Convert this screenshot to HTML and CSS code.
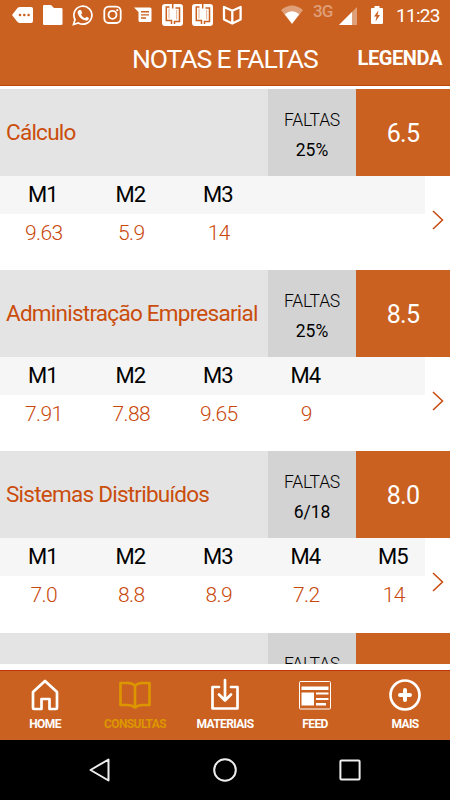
FILE: index.html
```html
<!DOCTYPE html>
<html lang="pt-BR">

<head>
    <meta charset="UTF-8">
    <meta name="viewport" content="width=device-width, initial-scale=1.0">
    <title>Notas e Faltas</title>
    <link rel="stylesheet" href="styles.css">
</head>

<body>
    <div class="app">
        <header>
            <div class="status">
                <svg width="250" height="30" viewBox="0 0 250 30" fill="#fff">
                    <path d="M12 15 L17.5 8 Q18.5 7 20 7 H31 Q33 7 33 9 V21 Q33 23 31 23 H20 Q18.5 23 17.5 22 Z" />
                    <g fill="#ca6120">
                        <circle cx="20" cy="15" r="1.3" />
                        <circle cx="24.3" cy="15" r="1.3" />
                        <circle cx="28.6" cy="15" r="1.3" />
                    </g>
                    <path d="M43 6 Q43 5 44 5 H51 L54 8 H61 Q62.5 8 62.5 9 V24 Q62.5 25 61 25 H44 Q43 25 43 24 Z" />
                    <path d="M73.5 24.5 L75 19.5 A9 9 0 1 1 78.3 22.9 Z" fill="none" stroke="#fff" stroke-width="1.7" />
                    <path d="M79 10 L81 10 L82.3 13 L81 14.5 Q82.5 17.5 85 18.3 L86.5 16.7 L89 18 Q88.5 21 86 20.6 Q79.5 19.5 77.6 13 Q77.5 11 79 10 Z" />
                    <g fill="none" stroke="#fff" stroke-width="1.8">
                        <rect x="104.3" y="6.6" width="16.4" height="16.4" rx="4.5" />
                        <circle cx="112.5" cy="14.8" r="4" />
                    </g>
                    <circle cx="117.3" cy="10.2" r="1.1" />
                    <path d="M134 7.5 H150 Q151.5 7.5 151.5 9 V20.5 Q151.5 22 150 22 H140 Q138.5 22 138.5 20.5 V12 Z" />
                    <path d="M141 11.8 H149 M141 14.9 H149 M141 18 H146" stroke="#ca6120" stroke-width="1.4" />
                    <g id="brackets">
                        <rect x="162" y="4" width="21" height="22" rx="3" />
                        <path d="M169.5 7 H166.3 V20.5 H171.5 V24 M175.5 8 H179.5 V21.5 H174.5 V24 M172.7 4 V8.5" fill="none" stroke="#ca6120" stroke-width="1.5" />
                        <path d="M169 8.5 V18.5 M176.7 10 V19.5" fill="none" stroke="#ca6120" stroke-width=".5" />
                    </g>
                    <use href="#brackets" x="30" />
                    <path d="M224 7 L232.3 10.8 L240.6 7 V19.5 L232.3 23.5 L224 19.5 Z M232.3 10.8 V23" fill="none" stroke="#fff" stroke-width="2.3" stroke-linejoin="round" />
                </svg>
                <div class="signal">
                    <svg class="wifi" width="24" height="20" viewBox="0 0 24 20">
                        <path d="M1 5 Q12 -4 23 5 L12 19 Z" fill="#fff" opacity=".4" />
                        <path d="M4.7 9.3 Q12 3.3 19.3 9.3 L12 18.7 Z" fill="#fff" />
                    </svg>
                    <span class="network">3G</span>
                    <svg class="bars" width="18" height="18" viewBox="0 0 18 18">
                        <path d="M18 0 V18 H0 Z" fill="#fff" opacity=".4" />
                        <path d="M13 5 V18 H0 Z" fill="#fff" />
                    </svg>
                    <svg class="battery" width="12" height="18" viewBox="0 0 12 18">
                        <path d="M3.5 0 H8.5 V2 H11 Q12 2 12 3 V17 Q12 18 11 18 H1 Q0 18 0 17 V3 Q0 2 1 2 H3.5 Z" fill="#fff" />
                        <path d="M7.5 4.3 L3 10.5 H5.5 L4.5 15.5 L9 9 H6.5 Z" fill="#ca6120" />
                    </svg>
                    <span class="clock">11:23</span>
                </div>
            </div>
            <div class="titlebar">
                <h1>NOTAS E FALTAS</h1>
                <a class="legend">LEGENDA</a>
            </div>
        </header>

        <main>
            <section class="course">
                <div class="summary">
                    <h2>Cálculo</h2>
                    <div class="absences"><span>FALTAS</span><b>25%</b></div>
                    <div class="average">6.5</div>
                </div>
                <div class="details">
                    <div class="grades">
                        <div class="labels"><span>M1</span><span>M2</span><span>M3</span></div>
                        <div class="values"><span>9.63</span><span>5.9</span><span>14</span></div>
                    </div>
                    <svg class="arrow" viewBox="0 0 12 20"><path d="M1 1 L10.5 10 L1 19" /></svg>
                </div>
            </section>

            <section class="course">
                <div class="summary">
                    <h2>Administração Empresarial</h2>
                    <div class="absences"><span>FALTAS</span><b>25%</b></div>
                    <div class="average">8.5</div>
                </div>
                <div class="details">
                    <div class="grades">
                        <div class="labels"><span>M1</span><span>M2</span><span>M3</span><span>M4</span></div>
                        <div class="values"><span>7.91</span><span>7.88</span><span>9.65</span><span>9</span></div>
                    </div>
                    <svg class="arrow" viewBox="0 0 12 20"><path d="M1 1 L10.5 10 L1 19" /></svg>
                </div>
            </section>

            <section class="course">
                <div class="summary">
                    <h2>Sistemas Distribuídos</h2>
                    <div class="absences"><span>FALTAS</span><b>6/18</b></div>
                    <div class="average">8.0</div>
                </div>
                <div class="details">
                    <div class="grades">
                        <div class="labels"><span>M1</span><span>M2</span><span>M3</span><span>M4</span><span>M5</span></div>
                        <div class="values"><span>7.0</span><span>8.8</span><span>8.9</span><span>7.2</span><span>14</span></div>
                    </div>
                    <svg class="arrow" viewBox="0 0 12 20"><path d="M1 1 L10.5 10 L1 19" /></svg>
                </div>
            </section>

            <section class="course">
                <div class="summary">
                    <h2></h2>
                    <div class="absences"><span>FALTAS</span><b></b></div>
                    <div class="average"></div>
                </div>
            </section>
        </main>

        <nav class="tabs">
            <a>
                <svg viewBox="0 0 34 34"><path d="M5 14 L17 3 L29 14 V30 Q29 31 28 31 H21.5 V21 H13.5 V31 H6 Q5 31 5 30 Z" /></svg>
                <span>HOME</span>
            </a>
            <a class="active">
                <svg viewBox="0 0 34 34"><path d="M17 7.5 Q13 4.5 8 5 H2.5 V27 H9 Q14 27 17 29.5 Q20 27 25 27 H31.5 V5 H26 Q21 4.5 17 7.5 V28" /></svg>
                <span>CONSULTAS</span>
            </a>
            <a>
                <svg viewBox="0 0 34 34"><path d="M11 9 H4.5 V30.5 H29.5 V9 H23 M17 2 V21 M11 16.5 L17 22.5 L23 16.5" /></svg>
                <span>MATERIAIS</span>
            </a>
            <a>
                <svg class="feed" viewBox="0 0 34 34">
                    <rect x="1.5" y="3.5" width="31" height="27.5" rx="1" />
                    <path class="fill" d="M3.5 8.5 H30.5 V12 H3.5 Z M3.5 14.5 H16 V27.5 H3.5 Z M18 14.5 H30.5 V16.5 H18 Z M18 20 H30.5 V22 H18 Z M18 25 H28 V27.5 H18 Z" />
                </svg>
                <span>FEED</span>
            </a>
            <a>
                <svg viewBox="0 0 34 34"><circle cx="17" cy="17" r="14.5" /><path class="plus" d="M17 12 V22 M12 17 H22" /></svg>
                <span>MAIS</span>
            </a>
        </nav>

        <div class="android">
            <svg viewBox="0 0 24 24"><path d="M20.5 1.5 V22.5 L2.5 12 Z" /></svg>
            <svg viewBox="0 0 24 24"><circle cx="12" cy="12" r="10.8" /></svg>
            <svg viewBox="0 0 24 24"><rect x="2.4" y="2.4" width="19.2" height="19.2" rx="1" /></svg>
        </div>
    </div>
</body>

</html>
```
FILE: styles.css
```css
* {
    box-sizing: border-box;
}

body {
    margin: 0;
    font-family: Roboto, "Open Sans", sans-serif;
    background: white;
}

.app {
    width: 450px;
    height: 800px;
    display: flex;
    flex-direction: column;
    overflow: hidden;
}

header {
    height: 86px;
    background: #ca6120;
    border-bottom: 1px solid #c1440a;
    color: white;
}

.status {
    height: 30px;
    display: flex;
}

.signal {
    flex: 1;
    display: flex;
    align-items: flex-start;
}

.wifi {
    margin: 5px 0 0 30px;
}

.network {
    width: 22px;
    margin: 2px 0 0 9px;
    font-size: 17px;
    line-height: 18px;
    font-weight: 500;
    letter-spacing: -1px;
    color: #df9f79;
}

.bars {
    margin: 7px 0 0 4px;
}

.battery {
    margin: 6px 0 0 14px;
}

.clock {
    margin: 5px 0 0 13px;
    font-size: 19px;
    line-height: 22px;
    letter-spacing: -0.7px;
}

.titlebar {
    height: 56px;
    display: grid;
    grid-template-columns: 132px 1fr auto;
    align-items: center;
    padding-right: 8px;
}

h1 {
    grid-column: 2;
    margin: 0;
    font-size: 26.5px;
    font-weight: 400;
    letter-spacing: -1.1px;
    white-space: nowrap;
}

.legend {
    font-size: 20px;
    font-weight: 700;
    letter-spacing: -0.4px;
}

main {
    height: 575px;
    margin: 3px 0 6px;
    overflow: hidden;
}

.course {
    height: 181.2px;
}

.summary {
    height: 87px;
    display: grid;
    grid-template-columns: 268px 88px 1fr;
    background: #e4e4e4;
}

h2 {
    margin: 0;
    padding-left: 6px;
    font-size: 22.5px;
    line-height: 87px;
    font-weight: 400;
    letter-spacing: -0.75px;
    color: #ca4d0c;
    white-space: nowrap;
}

.absences {
    padding-top: 16px;
    background: #d3d3d3;
    display: flex;
    flex-direction: column;
    align-items: center;
    line-height: 30px;
}

.absences span {
    font-size: 17.5px;
    font-weight: 300;
    letter-spacing: -0.2px;
}

.absences b {
    font-size: 17.5px;
    font-weight: 400;
}

.average {
    height: 87px;
    background: #ca6120;
    color: white;
    font-size: 25px;
    line-height: 89px;
    letter-spacing: -0.7px;
    text-align: center;
}

.details {
    height: 74px;
    display: flex;
}

.grades {
    width: 425px;
}

.labels,
.values {
    display: grid;
    grid-template-columns: repeat(5, 87.5px);
    text-align: center;
    line-height: 38px;
}

.labels {
    height: 37.5px;
    background: #f6f6f6;
    font-size: 22px;
    letter-spacing: -1px;
}

.labels span {
    padding-right: 2px;
}

.values {
    font-size: 21px;
    font-weight: 300;
    letter-spacing: -0.6px;
    color: #c8480c;
}

.arrow {
    width: 12px;
    height: 20px;
    margin: 34px 0 0 6.5px;
    fill: none;
    stroke: #c8480c;
    stroke-width: 1.5;
}

.tabs {
    height: 70px;
    background: #ca6120;
    border-top: 1px solid #c1340a;
    display: grid;
    grid-template-columns: repeat(5, 1fr);
    color: white;
}

.tabs a {
    display: flex;
    flex-direction: column;
    align-items: center;
    padding-top: 7px;
    font-size: 12px;
    line-height: 14px;
    font-weight: 700;
    letter-spacing: -0.6px;
}

.tabs .active {
    color: #dc9600;
}

.tabs svg {
    width: 34px;
    height: 34px;
    margin-bottom: 5px;
    fill: none;
    stroke: currentColor;
    stroke-width: 2.7;
    stroke-linecap: round;
    stroke-linejoin: round;
}

.tabs .feed {
    stroke-width: 1;
}

.tabs .fill {
    fill: white;
    stroke: none;
}

.tabs .plus {
    stroke-width: 4;
}

.android {
    height: 60px;
    background: black;
    display: flex;
    justify-content: center;
    align-items: center;
    gap: 101px;
}

.android svg {
    width: 24px;
    height: 24px;
    fill: none;
    stroke: #eee;
    stroke-width: 2;
    stroke-linejoin: round;
}
```
